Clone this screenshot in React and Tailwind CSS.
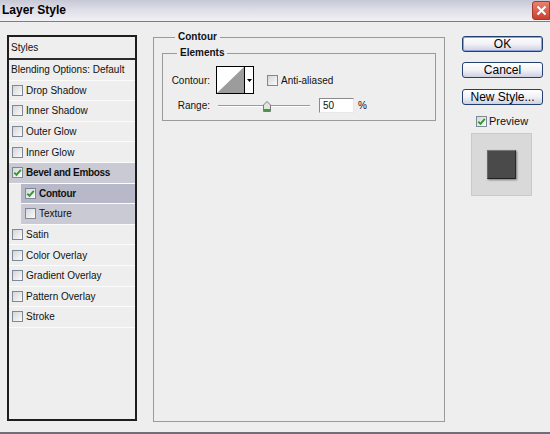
import React from 'react';

const font = { fontFamily: '"Liberation Sans", Arial, sans-serif' };

// small win-style checkbox
const Check = ({ checked }) => (
  <span className="w-[11px] h-[11px] shrink-0 border border-[#7d8898] bg-linear-to-br from-[#d6d6d6] to-[#fbfbfb] flex items-center justify-center">
    {checked && (
      <svg width="9" height="9" viewBox="0 0 9 9">
        <path d="M1.3 4.6 L3.5 6.8 L7.8 1.8" stroke="#2e9a2e" strokeWidth="1.9" fill="none" />
      </svg>
    )}
  </span>
);

const Row = ({ label, checked, bold, className = '' }) => (
  <div
    className={`h-[20.6px] shrink-0 border-b border-[#fbfbfb] flex items-center gap-[3px] pl-[3px] ${className}`}
  >
    <Check checked={checked} />
    <span className={bold ? 'font-bold tracking-[-0.3px]' : ''}>{label}</span>
  </div>
);

const Button = ({ children, primary, className = '' }) => (
  <div
    className={`h-[16px] rounded-[3px] border border-[#22406f] bg-linear-to-b from-white via-[#f1f1f6] to-[#cfd0e0] flex items-center justify-center text-[12px] text-black ${
      primary ? 'shadow-[inset_0_0_0_1px_#8aa6d8]' : ''
    } ${className}`}
  >
    {children}
  </div>
);

export default function App() {
  return (
    <div
      className="w-[550px] h-[434px] bg-[#eeeeee] border-b-2 border-[#6f6f78] flex flex-col text-[10px] text-[#111] overflow-hidden"
      style={font}
    >
      {/* title bar */}
      <div className="h-[22px] shrink-0 border-b border-[#7c7c88] bg-linear-to-b from-[#c6c8d6] via-[#dfe0e8] to-[#f1f1f5] flex items-start justify-between">
        <span className="pl-[2px] pt-[3px] text-[12px] font-bold text-black leading-[14px]">Layer Style</span>
        <div className="mt-[1px] w-[18px] h-[19px] rounded-l-[3px] bg-linear-to-b from-[#e9816f] to-[#c8402e] border border-[#a33a2c] flex items-center justify-center">
          <svg width="11" height="11" viewBox="0 0 11 11">
            <path d="M1.5 1.5 L9.5 9.5 M9.5 1.5 L1.5 9.5" stroke="white" strokeWidth="2" />
          </svg>
        </div>
      </div>

      <div className="flex items-start pl-[7px]">
        {/* styles list */}
        <div className="mt-[13px] w-[130px] h-[386px] border-2 border-[#1e1e1e] flex flex-col">
          <div className="h-[23px] shrink-0 border-b-2 border-[#2a2a2a] pl-[2px] flex items-center">Styles</div>
          <div className="h-[20.6px] shrink-0 border-b border-[#fbfbfb] pl-[2px] flex items-center">
            Blending Options: Default
          </div>
          <Row label="Drop Shadow" />
          <Row label="Inner Shadow" />
          <Row label="Outer Glow" />
          <Row label="Inner Glow" />
          <Row label="Bevel and Emboss" checked bold className="bg-[#c9cad4]" />
          <Row label="Contour" checked bold className="ml-[12px] pl-[4px] bg-[#b7b8c8]" />
          <Row label="Texture" className="ml-[12px] pl-[4px] bg-[#c9cad4]" />
          <Row label="Satin" />
          <Row label="Color Overlay" />
          <Row label="Gradient Overlay" />
          <Row label="Pattern Overlay" />
          <Row label="Stroke" />
        </div>

        {/* contour settings */}
        <fieldset className="ml-[16px] mt-[9px] w-[292px] h-[391px] border border-[#9a9a9a] px-[8px]">
          <legend className="ml-[13px] px-[3px] font-bold leading-[12px] text-[10px]">Contour</legend>
          <fieldset className="mt-[4px] border border-[#9a9a9a] pb-[7px]">
            <legend className="ml-[14px] px-[3px] font-bold leading-[12px]">Elements</legend>
            <div className="mt-[7px] flex items-center">
              <span className="w-[47px] text-right">Contour:</span>
              <div className="ml-[6px] w-[38px] h-[28px] border border-black bg-white flex">
                <svg width="27" height="26" viewBox="0 0 27 26" className="block">
                  <path d="M0 26 L27 0 L27 26 Z" fill="#9c9c9c" />
                </svg>
                <div className="flex-1 border-l border-black flex items-center justify-center">
                  <svg width="5" height="3" viewBox="0 0 5 3">
                    <path d="M0 0 L5 0 L2.5 3 Z" fill="#000" />
                  </svg>
                </div>
              </div>
              <span className="ml-[13px]">
                <Check />
              </span>
              <span className="ml-[3px]">Anti-aliased</span>
            </div>
            <div className="mt-[4px] h-[15px] flex items-center">
              <span className="w-[47px] text-right">Range:</span>
              <div className="ml-[8px] w-[92px] h-[15px] relative flex items-center">
                <div className="w-full h-[2px] border-t border-[#9a9a9a] border-b border-b-white" />
                <svg width="8" height="11" viewBox="0 0 8 11" className="absolute left-[45px] top-[3px]">
                  <path d="M4 0.5 L7.5 4 L7.5 10.5 L0.5 10.5 L0.5 4 Z" fill="#e4e4e4" stroke="#7a7a7a" />
                  <rect x="1" y="8" width="6" height="2.5" fill="#3e9e3e" />
                </svg>
              </div>
              <div className="ml-[9px] w-[35px] h-[15px] bg-white border border-[#8a8a8a] border-b-[#e8e8e8] border-r-[#e8e8e8] flex items-center pl-[3px]">
                50
              </div>
              <span className="ml-[4px]">%</span>
            </div>
          </fieldset>
        </fieldset>

        {/* buttons */}
        <div className="ml-[17px] mt-[14px] w-[81px] flex flex-col">
          <Button primary>OK</Button>
          <Button className="mt-[10px]">Cancel</Button>
          <Button className="mt-[11px]">New Style...</Button>
          <div className="mt-[9px] h-[14px] flex items-center pl-[14px] gap-[2px] text-[11px]">
            <Check checked />
            <span>Preview</span>
          </div>
          <div className="mt-[5px] ml-[9px] w-[61px] h-[63px] bg-[#d9d9d9] border border-[#cacaca] flex items-center justify-center">
            <div className="w-[29px] h-[29px] bg-[#4a4a4a] border border-t-[#777] border-l-[#6a6a6a] border-r-[#2a2a2a] border-b-[#222] shadow-[1px_1px_2px_rgba(0,0,0,0.45)]" />
          </div>
        </div>
      </div>
    </div>
  );
}
